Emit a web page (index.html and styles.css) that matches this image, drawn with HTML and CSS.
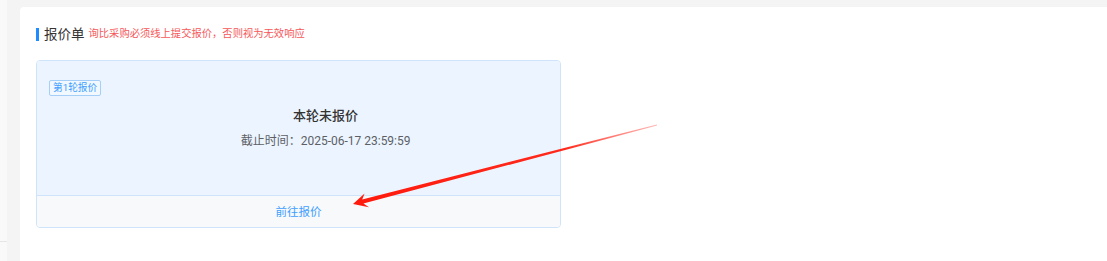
FILE: index.html
```html
<!DOCTYPE html>
<html lang="zh-CN">
<head>
<meta charset="utf-8">
<title>报价单</title>
<link rel="stylesheet" href="styles.css">
</head>
<body>
<div class="page">
  <aside class="side"><div class="side-block"></div></aside>
  <main class="main">
    <div class="section-title">
      <span class="bar"></span>
      <span class="title">报价单</span>
      <span class="hint">询比采购必须线上提交报价，否则视为无效响应</span>
    </div>
    <div class="quote-card">
      <div class="card-body">
        <span class="tag">第1轮报价</span>
        <div class="card-info">
          <div class="status">本轮未报价</div>
          <div class="deadline">截止时间：2025-06-17 23:59:59</div>
        </div>
      </div>
      <div class="card-footer">前往报价</div>
    </div>
  </main>
  <svg class="annot" width="1107" height="261" viewBox="0 0 1107 261">
    <defs>
      <linearGradient id="fade" x1="353" y1="204" x2="657" y2="125" gradientUnits="userSpaceOnUse">
        <stop offset="0" stop-color="#ff1a0d"/>
        <stop offset="0.7" stop-color="#ff2a1c"/>
        <stop offset="1" stop-color="#ff5048" stop-opacity="0.4"/>
      </linearGradient>
    </defs>
    <polygon fill="url(#fade)" points="353,204 369,207.2 363.4,203.5 657.1,125.6 656.9,124.4 362.2,199.4 364.6,193.6"/>
  </svg>
</div>
</body>
</html>
```
FILE: styles.css
```css
* { box-sizing: border-box; }
html, body { margin: 0; padding: 0; }
body {
  width: 1107px;
  height: 261px;
  overflow: hidden;
  background: #f4f4f4;
  font-family: Roboto, "Noto Sans CJK SC", "Noto Sans", sans-serif;
  color: #333;
}
.page {
  position: relative;
  display: flex;
  gap: 13px;
  height: 261px;
}
.side {
  width: 7px;
  flex: none;
  background: #f9f9f9;
}
.side-block {
  height: 242px;
  border-bottom: 1px solid #e6e6e6;
}
.main {
  flex: 1;
  margin-top: 7px;
  background: #fff;
  border-top-left-radius: 4px;
  padding: 20px 16px 0 16px;
}
.section-title {
  display: flex;
  align-items: center;
  height: 14px;
  line-height: 14px;
}
.bar {
  width: 3px;
  height: 13px;
  background: #1e8cff;
  margin-right: 5px;
}
.title {
  font-size: 13.5px;
  color: #333;
  margin-right: 4px;
}
.hint {
  font-size: 10.3px;
  color: #f5585a;
}
.quote-card {
  margin-top: 19px;
  width: 525px;
  border: 1px solid #cfe3fa;
  border-radius: 4px;
  overflow: hidden;
}
.card-body {
  height: 134px;
  background: #ecf5ff;
  padding: 19px 12px 0 12px;
  display: flex;
  align-items: flex-start;
  gap: 2px;
}
.tag {
  flex: none;
  height: 16px;
  line-height: 14px;
  padding: 0 3px;
  font-size: 9.7px;
  color: #409eff;
  border: 1px solid #a6cff7;
  border-radius: 2px;
  background: #f2f8ff;
}
.card-info {
  flex: 1;
  display: flex;
  flex-direction: column;
  align-items: center;
  padding-top: 26px;
}
.status {
  font-size: 13px;
  line-height: 20px;
  font-weight: 500;
  color: #333;
}
.deadline {
  margin-top: 6px;
  font-size: 12px;
  line-height: 18px;
  color: #5c5f66;
}
.card-footer {
  height: 32px;
  border-top: 1px solid #cfe3fa;
  background: #f7f9fb;
  text-align: center;
  line-height: 32px;
  font-size: 11.5px;
  color: #409eff;
}
.annot {
  position: absolute;
  left: 0;
  top: 0;
  pointer-events: none;
}
```
